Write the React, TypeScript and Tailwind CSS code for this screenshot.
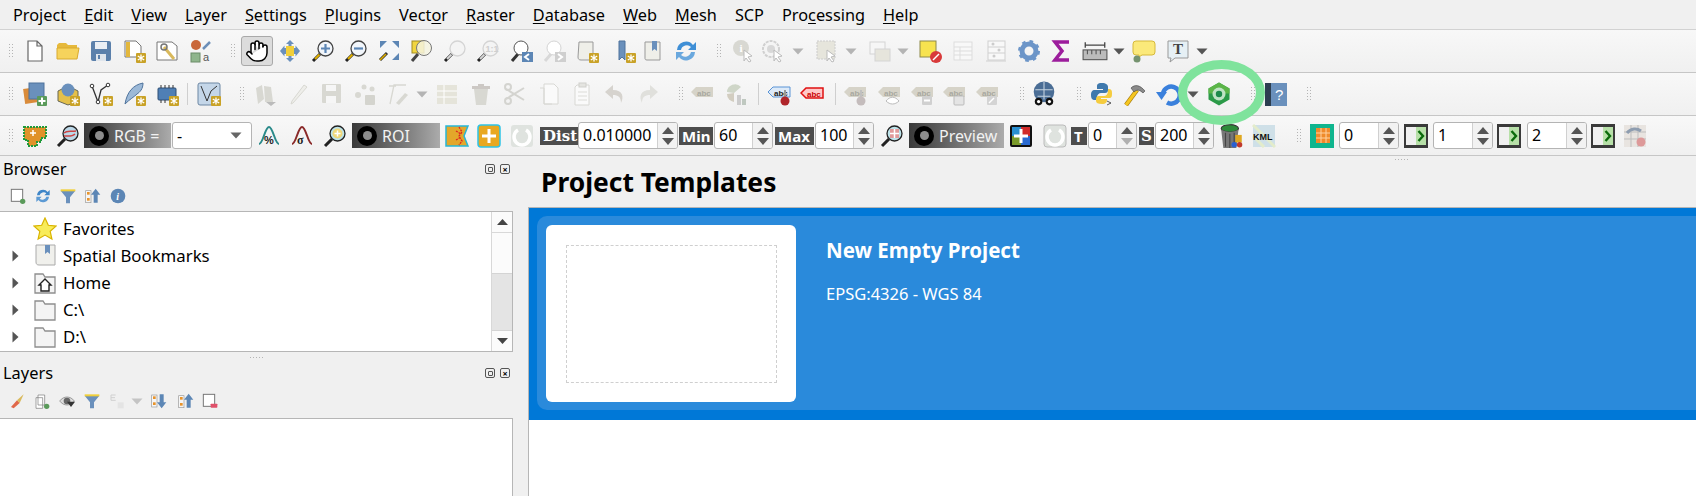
import type { ReactNode } from "react";
import { Hand } from "lucide-react";

const FONT = "font-['Noto_Sans',sans-serif]";

// ---------- svg pieces ----------

function I({ s = 24, children }: { s?: number; children: ReactNode }) {
  return (
    <svg width={s} height={s} viewBox="0 0 24 24" className="block shrink-0">
      {children}
    </svg>
  );
}

const Badge = () => (
  <g>
    <rect x="14" y="14" width="10" height="10" rx="1" fill="#c9a227" />
    <path d="M19 15.500v7M15.800 17l6.400 4M22.200 17l-6.400 4" stroke="#fff" strokeWidth="1.300" />
  </g>
);

const Plus = () => (
  <g>
    <rect x="14" y="14" width="10" height="10" rx="1" fill="#5a9a5a" />
    <path d="M19 15.500v7M15.500 19h7" stroke="#fff" strokeWidth="2" />
  </g>
);

function Mag({ fill = "#f2f6fb", ring = "#444", handle = "#e0b000", children }: { fill?: string; ring?: string; handle?: string; children?: ReactNode }) {
  return (
    <I>
      <path d="M9 15L2 22" stroke="#222" strokeWidth="3" />
      <path d="M8.500 15.500L4 20" stroke={handle} strokeWidth="2" />
      <circle cx="14.500" cy="9.500" r="7.500" fill={fill} stroke={ring} strokeWidth="1.300" />
      {children}
    </I>
  );
}

const GreyMag = ({ children }: { children?: ReactNode }) => (
  <Mag fill="#f4f4f4" ring="#d4d4d4" handle="#d8d8d8">{children}</Mag>
);

const Dd = ({ c = "#666" }: { c?: string }) => (
  <svg width="12" height="7" viewBox="0 0 12 7" className="block">
    <path d="M0.500 0.500h11L6 6.500z" fill={c} />
  </svg>
);

function Tag({ c = "#d6d3c8", t = "#a8a8a0", tail }: { c?: string; t?: string; tail?: ReactNode }) {
  return (
    <I>
      <path d="M1 10l5-5h17v10H6z" fill={c} />
      <text x="7" y="13.500" fontSize="8" fontWeight="700" fontFamily="Liberation Sans" fill={t}>abc</text>
      {tail}
    </I>
  );
}

const Grey = "#d8d8d2";

// ---------- toolbar parts ----------

function Btn({ className = "w-[33px]", children }: { className?: string; children?: ReactNode }) {
  return <div className={`flex h-[30px] shrink-0 items-center justify-center ${className}`}>{children}</div>;
}

function Grip({ className = "ml-[8px]" }: { className?: string }) {
  return (
    <div className={`flex h-[30px] w-[16px] shrink-0 items-center justify-center ${className}`}>
      <div className="h-[16px] w-[5px] bg-[radial-gradient(#b4b4b4_0.8px,transparent_1px)] bg-[length:3px_3px]" />
    </div>
  );
}

function Sep({ className = "mx-[2px]" }: { className?: string }) {
  return <div className={`h-[22px] w-px shrink-0 bg-[#cfcfcf] ${className}`} />;
}

function Bar({ children, h = "h-[43px]" }: { children: ReactNode; h?: string }) {
  return (
    <div className={`flex ${h} items-center border-b border-[#c6c6c6] bg-gradient-to-b from-[#f8f8f8] to-[#f0f0f0] pl-[2px]`}>
      {children}
    </div>
  );
}

function Spin({ value, className, atMin }: { value: string; className: string; atMin?: boolean }) {
  return (
    <div className={`flex h-[27px] shrink-0 items-stretch overflow-hidden rounded-[3px] border border-[#b4b4b4] bg-white ${className}`}>
      <div className="flex-1 pl-[4px] text-[16px] leading-[25px] text-black">{value}</div>
      <div className="flex w-[20px] flex-col items-center justify-center gap-[4px] border-l border-[#d0d0d0] bg-[#f2f2f2]">
        <svg width="12" height="7" viewBox="0 0 12 7"><path d="M6 0l6 7H0z" fill="#555" /></svg>
        <svg width="12" height="7" viewBox="0 0 12 7"><path d="M6 7l6-7H0z" fill={atMin ? "#b0b0b0" : "#555"} /></svg>
      </div>
    </div>
  );
}

function Tab({ t, className, font = "" }: { t: string; className: string; font?: string }) {
  return (
    <div className={`h-[18px] shrink-0 overflow-hidden bg-[#4d4d4d] text-[15px] font-bold leading-[18px] text-white ${font} ${className}`}>{t}</div>
  );
}

function RingLabel({ t, className }: { t: string; className: string }) {
  return (
    <div className={`flex h-[25px] shrink-0 items-center bg-gradient-to-r from-[#3a3a3a] to-[#ababab] pl-[5px] ${className}`}>
      <div className="flex size-[20px] shrink-0 items-center justify-center rounded-full bg-black">
        <div className="size-[9px] rounded-full bg-[#8c8c8c]" />
      </div>
      <span className="ml-[5px] text-[16px] text-[#f2f2f2]">{t}</span>
    </div>
  );
}

function NextBtn({ className }: { className: string }) {
  return (
    <div className={`flex h-[24px] w-[24px] shrink-0 justify-end border-y-[3px] border-x-2 border-[#3a3a3a] bg-[#f0f0f0] ${className}`}>
      <div className="flex w-[10px] items-center justify-center bg-[#b7e0a8] text-[#0b6b0b]">
        <svg width="8" height="12" viewBox="0 0 8 12"><path d="M1.500 1l4.500 5-4.500 5" fill="none" stroke="currentColor" strokeWidth="2.400" /></svg>
      </div>
    </div>
  );
}

// ---------- rows ----------

const MENU: [string, string, string][] = [
  ["", "", "Project"],
  ["", "E", "dit"],
  ["", "V", "iew"],
  ["", "L", "ayer"],
  ["", "S", "ettings"],
  ["", "P", "lugins"],
  ["Vect", "o", "r"],
  ["", "R", "aster"],
  ["", "D", "atabase"],
  ["", "W", "eb"],
  ["", "M", "esh"],
  ["", "", "SCP"],
  ["Pro", "c", "essing"],
  ["", "H", "elp"],
];

function MenuBar() {
  return (
    <div className="flex h-[30px] items-center gap-[18px] border-b border-[#d2d2d2] bg-[#f0f0f0] pl-[13px] pt-[2px] text-[16.300px] text-black">
      {MENU.map(([a, u, b]) => (
        <span key={a + u + b} className="whitespace-pre">
          {a}
          <span className="underline underline-offset-2">{u}</span>
          {b}
        </span>
      ))}
    </div>
  );
}

function Toolbar1() {
  return (
    <Bar>
      <Grip className="ml-0" />
      <Btn><I><path d="M5 2h9l5 5v15H5z M14 2v5h5" fill="#fff" stroke="#666" strokeWidth="1.200" /></I></Btn>
      <Btn><I><path d="M1 6l2-2h7l2 2h9v3H1z" fill="#e6b93c" /><path d="M1 20V9h22l-2 11z" fill="#f6d35c" stroke="#d9aa2e" /></I></Btn>
      <Btn><I><rect x="2" y="2" width="20" height="20" rx="2" fill="#5b80ab" /><rect x="6" y="3" width="12" height="7" fill="#e9eef4" /><rect x="7" y="15" width="10" height="7" fill="#dfe5ec" /><rect x="9" y="16" width="2" height="4" fill="#5b80ab" /></I></Btn>
      <Btn><I><path d="M3 2h11l5 5v11H3z" fill="#fff" stroke="#777" /><path d="M6 3v15" stroke="#e3b73c" strokeWidth="4" /><Badge /></I></Btn>
      <Btn><I><path d="M2 3h15l5 4v14H2z" fill="#fff" stroke="#777" /><path d="M9 8l10 12" stroke="#d9b95c" strokeWidth="3" /><circle cx="9" cy="8" r="3" fill="none" stroke="#777" strokeWidth="1.500" /></I></Btn>
      <Btn><I><circle cx="8" cy="6" r="5" fill="#c9673a" /><path d="M15 10l7-7" stroke="#6d8fb8" strokeWidth="2.500" /><rect x="3" y="14" width="9" height="9" fill="#8fb58c" stroke="#6b8c68" /><text x="15" y="22" fontSize="11" fontFamily="Liberation Sans" fill="#555">a</text></I></Btn>
      <Grip />
      <Btn className="w-[33px]">
        <div className="flex h-[30px] w-[32px] items-center justify-center rounded-[3px] border border-[#a9a9a9] bg-[#dcdcdc]">
          <Hand size={24} strokeWidth={1.500} className="text-black" fill="#fff" />
        </div>
      </Btn>
      <Btn><I><path d="M12 1l4 4h-2.500v4h4V6.500L22 12l-4.500 5.500V15h-4v4H16l-4 4-4-4h2.500v-4h-4v2.500L2 12l4.500-5.500V9h4V5H8z" fill="#6a90bc" /><rect x="8" y="7" width="8" height="10" fill="#f1cf3a" /></I></Btn>
      <Btn><Mag><path d="M14.500 5v9M10 9.500h9" stroke="#5c86b5" strokeWidth="2.200" /></Mag></Btn>
      <Btn><Mag><path d="M10 9.500h9" stroke="#5c86b5" strokeWidth="2.200" /></Mag></Btn>
      <Btn><I><rect x="3" y="2" width="19" height="19" fill="#f4f6f8" /><path d="M3 2h7L3 9zM22 2v7l-7-7zM22 21h-7l7-7z" fill="#5c86b5" /><path d="M3 21l7-7" stroke="#333" strokeWidth="3" /><path d="M3 21l6-6" stroke="#e0b000" strokeWidth="1.600" /></I></Btn>
      <Btn><I><rect x="2" y="2" width="12" height="12" fill="#f1d53f" stroke="#a08a20" /><path d="M8 15l-6 7" stroke="#444" strokeWidth="3" /><circle cx="14" cy="9" r="7.500" fill="#f5f3e0" fillOpacity="0.850" stroke="#777" /></I></Btn>
      <Btn><GreyMag /></Btn>
      <Btn><GreyMag><text x="9.500" y="13" fontSize="9" fontWeight="700" fontFamily="Liberation Sans" fill="#cfcfcf">1:1</text></GreyMag></Btn>
      <Btn><I><path d="M9 15l-6 7" stroke="#333" strokeWidth="3" /><circle cx="12" cy="9" r="7" fill="#fff" stroke="#555" /><rect x="13" y="13" width="11" height="10" fill="#5c86b5" /><path d="M20 15l-4 3 4 3" fill="none" stroke="#fff" strokeWidth="2" /></I></Btn>
      <Btn><I><path d="M9 15l-6 7" stroke="#d8d8d8" strokeWidth="3" /><circle cx="12" cy="9" r="7" fill="#fff" stroke="#d4d4d4" /><rect x="13" y="13" width="11" height="10" fill="#cfcfcf" /><path d="M16 15l4 3-4 3" fill="none" stroke="#fff" strokeWidth="2" /></I></Btn>
      <Btn><I><path d="M4 3h14v18H6c-2 0-3-1-3-3z" fill="#efefe9" stroke="#999" /><Badge /></I></Btn>
      <Btn className="ml-[4px] w-[33px]"><I><path d="M7 2h6v19l-3-3-3 3z" fill="#6a90bc" stroke="#4f739c" /><Badge /></I></Btn>
      <Btn className="w-[25px]"><I><path d="M4 3h15v18H6c-2 0-2-1-2-2z" fill="#efefe9" stroke="#999" /><path d="M11 2h5v10l-2.500-2L11 12z" fill="#6a90bc" /></I></Btn>
      <Btn className="ml-[4px] w-[33px]"><I><path d="M3 11a9 9 0 0 1 16-5l3-3v8h-8l3-3a6 6 0 0 0-10 3z" fill="#3f8fd6" /><path d="M21 13a9 9 0 0 1-16 5l-3 3v-8h8l-3 3a6 6 0 0 0 10-3z" fill="#6aa8de" /></I></Btn>
      <Grip />
      <Btn><I><circle cx="10" cy="9" r="8" fill={Grey} /><text x="8.500" y="13" fontSize="11" fontWeight="700" fontFamily="Liberation Serif" fill="#fff">i</text><path d="M13 11l8 6-4 1 3 4-2 1-3-4-2 3z" fill="#fff" stroke="#bbb" /></I></Btn>
      <Btn className="w-[27px]"><I><circle cx="10" cy="10" r="8" fill="#f4f4f4" stroke="#d0d0d0" strokeWidth="2" strokeDasharray="3 1" /><circle cx="10" cy="10" r="4" fill="#d8d8d8" /><path d="M13 11l8 6-4 1 3 4-2 1-3-4-2 3z" fill="#fff" stroke="#bbb" /></I></Btn>
      <Btn className="w-[24px]"><Dd c="#b4b4b4" /></Btn>
      <Btn><I><rect x="2" y="2" width="18" height="18" fill="#e6e5dc" stroke="#ccc" strokeDasharray="2 1" /><path d="M12 11l8 6-4 1 3 4-2 1-3-4-2 3z" fill="#fff" stroke="#bbb" /></I></Btn>
      <Btn className="w-[16px]"><Dd c="#b4b4b4" /></Btn>
      <Btn className="ml-[4px] w-[33px]"><I><rect x="2" y="3" width="15" height="12" fill="#f6f6f6" stroke="#d4d4d4" /><rect x="7" y="10" width="15" height="12" fill="#e6e5dc" stroke="#d4d4d4" /></I></Btn>
      <Btn className="w-[14px]"><Dd c="#b4b4b4" /></Btn>
      <Btn className="ml-[3px] w-[33px]"><I><rect x="2" y="2" width="16" height="16" fill="#f7e34f" stroke="#8e8a4a" /><circle cx="18" cy="18" r="6" fill="#d83a3a" /><path d="M15 21l6-6" stroke="#fff" strokeWidth="1.500" /></I></Btn>
      <Btn><I><rect x="3" y="3" width="18" height="18" fill="#f8f8f8" stroke="#ddd" /><path d="M3 8h18M3 12h18M3 16h18M9 8v13" stroke="#ddd" /></I></Btn>
      <Btn><I><rect x="4" y="2" width="17" height="19" fill="#f8f8f8" stroke="#d0d0d0" /><path d="M2 22h20M4 8h17M4 14h17" stroke="#d0d0d0" /><circle cx="9" cy="5" r="1.500" fill="#ccc" /><circle cx="15" cy="11" r="1.500" fill="#ccc" /><circle cx="10" cy="17" r="1.500" fill="#ccc" /></I></Btn>
      <Btn><I><circle cx="12" cy="12" r="7" fill="none" stroke="#6c95c8" strokeWidth="5" /><circle cx="12" cy="12" r="9.500" fill="none" stroke="#6c95c8" strokeWidth="3" strokeDasharray="3.500 4" /></I></Btn>
      <Btn><I><path d="M19 3H5l7 9-7 9h14" fill="none" stroke="#9c1d9c" strokeWidth="3.500" /></I></Btn>
      <Btn><I s={26}><path d="M3 4v5M21 4v5M3 6.500h18" stroke="#444" strokeWidth="1.200" /><rect x="1" y="11" width="22" height="9" fill="#bbb" stroke="#555" /><path d="M5 11v4M9 11v4M13 11v4M17 11v4" stroke="#555" /></I></Btn>
      <Btn className="w-[16px]"><Dd c="#555" /></Btn>
      <Btn><I><path d="M4 2h16a3 3 0 0 1 3 3v8a3 3 0 0 1-3 3H10l-3 2v-2H4a3 3 0 0 1-3-3V5a3 3 0 0 1 3-3z" fill="#fbe97a" stroke="#d6b93a" /><circle cx="5" cy="20" r="3.500" fill="#75936f" /></I></Btn>
      <Btn className="ml-[1px] w-[33px]"><I><path d="M2 2h20v17H9l-5 4 1-4H2z" fill="#e6f0f5" stroke="#999" /><text x="7" y="15" fontSize="15" fontWeight="700" fontFamily="Liberation Serif" fill="#444">T</text></I></Btn>
      <Btn className="w-[16px]"><Dd c="#555" /></Btn>
    </Bar>
  );
}

function Toolbar2() {
  return (
    <Bar>
      <Grip className="ml-0" />
      <Btn><I><rect x="1" y="6" width="15" height="15" fill="#d98b3a" transform="rotate(-8 8 13)" /><rect x="6" y="1" width="15" height="16" fill="#6a90bc" stroke="#4f739c" /><Plus /></I></Btn>
      <Btn><I><path d="M2 9l10-5 10 5v10l-10 4-10-4z" fill="#e4c04a" stroke="#665" /><circle cx="12" cy="8" r="6.500" fill="#6a90bc" /><Badge /></I></Btn>
      <Btn><I><path d="M3 4l6 16 3-12 7-5" fill="none" stroke="#333" strokeWidth="1.300" /><circle cx="3" cy="4" r="1.800" fill="#fff" stroke="#333" /><circle cx="9" cy="20" r="1.800" fill="#fff" stroke="#333" /><circle cx="19" cy="3" r="1.800" fill="#fff" stroke="#333" /><Badge /></I></Btn>
      <Btn><I><path d="M3 22C5 10 11 3 21 1c0 6-3 9-6 11-3 3-7 5-12 10z" fill="#9cb9d8" stroke="#4f739c" /><Badge /></I></Btn>
      <Btn><I><rect x="3" y="6" width="18" height="12" rx="1" fill="#4f7fb5" stroke="#2f4f74" /><path d="M6 3v3M10 3v3M14 3v3M18 3v3M6 18v3M10 18v3" stroke="#333" /><Badge /></I></Btn>
      <Sep className="ml-[4px] mr-[4px]" />
      <Btn className="w-[33px]"><I><rect x="1" y="1" width="22" height="22" rx="2" fill="#c4d6e8" stroke="#6d87a3" /><path d="M4 4l6 15 4-10 6-5" fill="none" stroke="#333" /><Badge /></I></Btn>
      <Grip className="ml-[8px]" />
      <Btn className="w-[33px]"><I><path d="M4 22L2 6l6-3 2 14zM11 20L10 4l7 1 2 15z" fill={Grey} /><path d="M12 20h10l-5 4z" fill="#bbb" /></I></Btn>
      <Btn className="w-[33px]"><I><path d="M6 21L4 22l1-3L17 3l3 2z" fill="#eeeeea" stroke="#d8d8d2" /></I></Btn>
      <Btn className="w-[33px]"><I><rect x="2" y="2" width="19" height="19" rx="1" fill={Grey} /><rect x="6" y="3" width="10" height="6" fill="#f6f6f6" /><rect x="6" y="14" width="10" height="7" fill="#f6f6f6" /></I></Btn>
      <Btn className="w-[33px]"><I><circle cx="5" cy="13" r="3" fill={Grey} /><circle cx="11" cy="5" r="2.500" fill={Grey} /><circle cx="19" cy="7" r="2.500" fill={Grey} /><rect x="12" y="13" width="10" height="10" rx="1" fill="#d4d4ce" /></I></Btn>
      <Btn className="w-[33px]"><I><path d="M4 22L8 3h12M3 4h7" fill="none" stroke={Grey} strokeWidth="1.300" /><path d="M10 21l9-10 3 2-9 10z" fill={Grey} /></I></Btn>
      <Btn className="w-[16px]"><Dd c="#b4b4b4" /></Btn>
      <Btn className="w-[34px]"><I><path d="M2 3h20v19H2z" fill="#e5e4da" /><path d="M2 9h20M2 15h20M9 3v19" stroke="#fff" /></I></Btn>
      <Btn className="w-[34px]"><I><path d="M5 7h14l-2 16H7z" fill={Grey} /><path d="M3 4h18v3H3zM9 2h6v2H9z" fill="#ccc8c4" /></I></Btn>
      <Btn className="w-[34px]"><I><path d="M3 7l18 11M3 17L21 6" stroke="#d4d4d0" strokeWidth="2" /><circle cx="5" cy="5" r="3" fill="none" stroke="#d4d4d0" strokeWidth="2" /><circle cx="5" cy="19" r="3" fill="none" stroke="#d4d4d0" strokeWidth="2" /></I></Btn>
      <Btn className="w-[34px]"><I><path d="M7 2h10l4 4v16H7z" fill="#fafafa" stroke="#d8d8d4" /><path d="M3 6h4v16h8" fill="none" stroke="#d8d8d4" /></I></Btn>
      <Btn className="w-[32px]"><I><path d="M7 3h12v20H5V5z" fill="#fafafa" stroke="#d8d8d4" /><rect x="9" y="1" width="7" height="4" fill="#e4e4e0" stroke="#d0d0cc" /><path d="M8 10h9M8 14h9M8 18h9" stroke="#dcdcd8" /></I></Btn>
      <Btn className="w-[33px]"><I><path d="M10 3L2 10l8 7v-4c5 0 8 2 8 8 3-6 2-13-8-13z" fill="#d6d3ce" /></I></Btn>
      <Btn className="w-[33px]"><I><path d="M14 3l8 7-8 7v-4c-5 0-8 2-8 8-3-6-2-13 8-13z" fill="#e0e0dc" /></I></Btn>
      <Grip className="ml-[8px]" />
      <Btn className="w-[28px]"><Tag /></Btn>
      <Btn className="w-[40px]"><I><path d="M3 10a8 8 0 0 1 14-5l-7 6z" fill="#cfd6c8" /><path d="M3 12a8 8 0 0 0 7 8v-9z" fill="#d2cdc0" /><rect x="13" y="13" width="4" height="10" fill="#ccc" /><rect x="18" y="17" width="4" height="6" fill="#bfc8c0" /></I></Btn>
      <Sep />
      <Btn className="w-[36px]"><Tag c="#ddeaf8" t="#222" tail={<><path d="M1 10l5-5h17v10H6z" fill="none" stroke="#5a94d6" /><path d="M18 8v7" stroke="#999" strokeWidth="2" /><circle cx="18" cy="19" r="4.500" fill="#b0252a" /></>} /></Btn>
      <Btn className="w-[30px]"><I><path d="M1 11l5-5h17v10H6z" fill="#ffc8c8" stroke="#e01010" strokeWidth="1.500" /><text x="7" y="14.500" fontSize="8" fontWeight="700" fontFamily="Liberation Sans" fill="#c80000">abc</text></I></Btn>
      <Sep className="ml-[8px] mr-[2px]" />
      <Btn className="w-[34px]"><Tag tail={<><path d="M18 8v7" stroke="#c0c0c0" strokeWidth="2" /><circle cx="18" cy="19" r="4.500" fill="#c4bcbc" /></>} /></Btn>
      <Btn className="w-[34px]"><Tag tail={<path d="M9 19c4-5 9-5 13 0-4 4-9 4-13 0z" fill="#fff" stroke="#bbb" />} /></Btn>
      <Btn className="w-[32px]"><Tag tail={<><rect x="12" y="14" width="10" height="9" rx="1" fill="#d0d0d0" /><path d="M14 18.500h6" stroke="#fff" strokeWidth="2" /></>} /></Btn>
      <Btn className="w-[32px]"><Tag tail={<rect x="12" y="14" width="10" height="9" rx="1" fill="#e4e4e4" stroke="#bbb" />} /></Btn>
      <Btn className="w-[34px]"><Tag tail={<><rect x="12" y="14" width="10" height="9" rx="1" fill="#d4d4d4" /><path d="M14 21l5-5" stroke="#fff" strokeWidth="1.500" /></>} /></Btn>
      <Grip className="ml-[9px]" />
      <Btn className="w-[30px]"><I s={26}><circle cx="12" cy="10" r="9.500" fill="#4a6d95" /><path d="M4 8h16M6 14h12M12 1v16" stroke="#c5d3e0" /><circle cx="7" cy="19" r="3.500" fill="#111" /><circle cx="17" cy="19" r="3.500" fill="#111" /><circle cx="7" cy="19" r="1.500" fill="#fff" /><circle cx="17" cy="19" r="1.500" fill="#fff" /></I></Btn>
      <Grip className="ml-[11px]" />
      <Btn className="w-[32px]"><I><path d="M12 1c-5 0-5 2-5 4v2h6v1H5c-3 0-4 2-4 5s1 5 4 5h2v-3c0-2 2-4 4-4h4c2 0 3-1 3-3V5c0-2-2-4-6-4z" fill="#3f79ad" /><path d="M12 22c4 0 5-2 5-4v-1h-6v-1h8c3 0 3-2 3-5s-1-4-3-4h-1v2c0 3-2 5-4 5H9c-2 0-3 1-3 3v2c0 2 2 3 6 3z" fill="#f5cc3f" /><path d="M17 19l4 2-4 2" fill="none" stroke="#333" strokeWidth="0.800" /></I></Btn>
      <Btn className="w-[34px]"><I><path d="M3 23L14 8" stroke="#a67c10" strokeWidth="4.500" /><path d="M3 23L14 8" stroke="#f5c620" strokeWidth="3" /><path d="M8 6c4-4 9-3 14 3l-2 2c-3-3-6-4-9-1z" fill="#8a8a8a" stroke="#444" strokeWidth="0.600" /></I></Btn>
      <Btn className="w-[32px]"><I><path d="M7 11a8.500 8.500 0 1 1 4 9.500" fill="none" stroke="#3a80dc" strokeWidth="4.500" /><path d="M0 10h11l-5.500 8z" fill="#3a80dc" /></I></Btn>
      <Btn className="w-[18px]"><Dd c="#555" /></Btn>
      <Btn className="w-[34px]"><I><path d="M12 0.500l10.500 6v11L12 23.500l-10.500-6v-11z" fill="#2b9a48" /><path d="M12 0.500l10.500 6v5H1.500v-5z" fill="#5cb548" /><circle cx="12" cy="12" r="6.500" fill="#bfe3c4" /><circle cx="12" cy="12" r="3.200" fill="#1d8a4a" /></I></Btn>
      <Grip className="ml-[8px]" />
      <Btn className="w-[32px]"><I><rect x="1" y="1" width="22" height="23" fill="#6a90bc" /><rect x="1" y="1" width="6" height="23" fill="#2c3e50" /><text x="11" y="18" fontSize="15" fontFamily="Liberation Sans" fill="#fff">?</text></I></Btn>
      <Grip className="ml-[8px]" />
    </Bar>
  );
}

function Toolbar3() {
  return (
    <Bar h="h-[40px]">
      <Grip className="ml-0" />
      <Btn><I><path d="M1 3h22v11h-5v4h-4v4H5v-6H1z" fill="#e0922a" stroke="#1f9a3a" strokeWidth="2" strokeDasharray="2 1" /><path d="M10 6v6M7 9h6" stroke="#fff" strokeWidth="1.500" /></I></Btn>
      <Btn><Mag ring="#222" handle="#222" fill="#bcd8e8"><path d="M8 9c3-3 7-1 12-2M8 12c4 0 8 1 11-2" stroke="#c44" strokeWidth="1.500" fill="none" /></Mag></Btn>
      <RingLabel t="RGB =" className="w-[87px]" />
      <div className="ml-px flex h-[27px] w-[80px] shrink-0 items-center justify-between rounded-[3px] border border-[#b4b4b4] bg-white pl-[4px] pr-[9px] text-[16px]">
        <span>-</span>
        <Dd c="#666" />
      </div>
      <Btn className="w-[33px]"><I><path d="M2 20C6 20 8 3 12 3s6 17 10 17" fill="none" stroke="#2a8a8a" strokeWidth="2" /><text x="7" y="20" fontSize="11" fontWeight="700" fontFamily="Liberation Sans" fill="#222">%</text></I></Btn>
      <Btn className="w-[34px]"><I><path d="M2 20C6 20 8 3 12 3s6 17 10 17" fill="none" stroke="#8a2a2a" strokeWidth="2" /><text x="7" y="20" fontSize="12" fontWeight="700" fontFamily="Liberation Serif" fill="#222">σ</text></I></Btn>
      <Btn className="w-[32px]"><Mag ring="#222" handle="#222" fill="#bde3ea"><circle cx="14.500" cy="9.500" r="5" fill="#f0d87a" /><path d="M14.500 6.500v6M11.500 9.500h6" stroke="#fff" strokeWidth="1.500" /></Mag></Btn>
      <RingLabel t="ROI" className="ml-px w-[88px]" />
      <Btn className="w-[33px]"><I><path d="M1 2h22l-4 10 4 10H1z" fill="#e3a72a" stroke="#27b7d6" strokeWidth="1.500" /><path d="M14 3l3 5-3 4 3 5-3 4M11 7l5 3M11 16l5-3" fill="none" stroke="#e02020" strokeWidth="1.300" strokeDasharray="2 1" /></I></Btn>
      <Btn className="w-[32px]"><I><rect x="1" y="1" width="22" height="22" rx="3" fill="#e8a820" stroke="#2ec3e6" strokeWidth="1.500" /><path d="M12 5v14M5 12h14" stroke="#fff" strokeWidth="3" /></I></Btn>
      <Btn className="w-[33px]"><I><rect x="1" y="1" width="22" height="22" rx="3" fill="#dfe3df" /><path d="M8 6a8 8 0 1 0 8 0" fill="none" stroke="#fff" strokeWidth="3.500" /></I></Btn>
      <Tab t="Dist" className="ml-[2px] w-[38px] pl-[3px]" font="font-['DejaVu_Serif',serif]" />
      <Spin value="0.010000" className="w-[100px]" />
      <Tab t="Min" className="ml-px w-[34px] pl-[3px]" />
      <Spin value="60" className="ml-px w-[59px]" />
      <Tab t="Max" className="ml-[2px] w-[39px] pl-[3px]" />
      <Spin value="100" className="ml-px w-[59px]" />
      <Btn className="w-[35px]"><Mag ring="#222" handle="#222" fill="#bde3ea"><rect x="10" y="5" width="9" height="9" fill="#e09a9a" /><path d="M14.500 5v9M10 9.500h9" stroke="#fff" strokeWidth="1.500" /></Mag></Btn>
      <RingLabel t="Preview" className="w-[95px]" />
      <Btn className="w-[34px]"><I><rect x="1" y="1" width="22" height="22" rx="2" fill="#111" /><rect x="3" y="3" width="9" height="9" fill="#2a8fd0" /><rect x="12" y="3" width="9" height="9" fill="#d02a2a" /><rect x="3" y="12" width="9" height="9" fill="#7a9a2a" /><rect x="12" y="12" width="9" height="9" fill="#2a6ad0" /><path d="M12 5v14M5 12h14" stroke="#fff" strokeWidth="3" /></I></Btn>
      <Btn className="w-[33px]"><I><rect x="1" y="1" width="22" height="22" rx="3" fill="#dfe3df" stroke="#bbb" /><path d="M8 6a8 8 0 1 0 8 0" fill="none" stroke="#fff" strokeWidth="3.500" /></I></Btn>
      <Tab t="T" className="w-[16px] pl-[3px]" />
      <Spin value="0" className="ml-px w-[49px]" atMin />
      <Tab t="S" className="ml-[2px] w-[15px] pl-[2px]" font="font-['DejaVu_Serif',serif]" />
      <Spin value="200" className="ml-[1px] w-[59px]" />
      <Btn className="w-[36px]"><I s={26}><ellipse cx="10" cy="5" rx="8" ry="3.500" fill="#2d8a3a" stroke="#333" /><path d="M2 6l2 17h12l2-17c-4 3-12 3-16 0z" fill="#777" /><path d="M6 9v13M10 10v13M14 9v13" stroke="#444" /><rect x="15" y="11" width="6" height="7" fill="#e0a820" /><circle cx="19" cy="20" r="2.500" fill="#c0392b" /><circle cx="14" cy="20" r="2.500" fill="#2a5fd0" /></I></Btn>
      <Btn className="w-[28px]"><I><rect x="1" y="1" width="22" height="22" fill="#cfe0e8" /><path d="M1 1l22 22M1 12l11 11" stroke="#e3eccb" strokeWidth="3" /><text x="1" y="16" fontSize="9" fontWeight="700" fontFamily="Liberation Sans" fill="#111">KML</text></I></Btn>
      <Grip className="ml-[12px]" />
      <Btn className="w-[32px]"><I><rect x="0" y="0" width="24" height="24" fill="#0fb58e" /><rect x="6" y="4" width="14" height="15" fill="#f08a2a" /><path d="M6 9h14M6 14h14M11 4v15M16 4v15" stroke="#ffd2a0" /></I></Btn>
      <Spin value="0" className="ml-px w-[60px]" />
      <NextBtn className="ml-[5px]" />
      <Spin value="1" className="ml-[5px] w-[60px]" />
      <NextBtn className="ml-[4px]" />
      <Spin value="2" className="ml-[6px] w-[60px]" />
      <NextBtn className="ml-[4px]" />
      <Btn className="ml-[5px] w-[30px]"><I><rect x="1" y="1" width="22" height="22" fill="#e8e4e0" /><path d="M1 8h22M1 15h22M8 1v22M15 1v22" stroke="#bdbdbd" /><path d="M4 9c4-5 10-5 14-2" fill="none" stroke="#8e9db0" strokeWidth="3" /><circle cx="18" cy="18" r="4.500" fill="#d99" /></I></Btn>
    </Bar>
  );
}

// ---------- dock panels ----------

function DockTitle({ t }: { t: string }) {
  return (
    <div className="flex items-center justify-between pl-[3px] pr-[3px] text-[16.400px] leading-[22px] text-black">
      <span>{t}</span>
      <div className="flex gap-[5px]">
        <div className="flex size-[10px] items-center justify-center rounded-[2px] border border-[#555]"><div className="size-[5px] rounded-[1px] border border-[#555]" /></div>
        <div className="flex size-[10px] items-center justify-center rounded-[2px] border border-[#555] text-[9px] font-bold leading-none">×</div>
      </div>
    </div>
  );
}

const Small = ({ children, className = "w-[25px]" }: { children: ReactNode; className?: string }) => (
  <div className={`flex shrink-0 justify-center ${className}`}>
    <I s={16}>{children}</I>
  </div>
);

const GroupAdd = (
  <>
    <rect x="2" y="2" width="17" height="18" fill="#fff" stroke="#777" strokeWidth="1.500" />
    <circle cx="19" cy="20" r="4" fill="#5a9a5a" />
  </>
);
const Funnel = (
  <>
    <path d="M1 4h22l-8 10v9h-6v-9z" fill="#6a90bc" />
    <path d="M1 2h22v3H1z" fill="#f0cf3a" />
  </>
);
const TreeUp = (
  <>
    <rect x="1" y="4" width="8" height="18" fill="#f5f5f5" stroke="#999" />
    <rect x="3" y="6" width="4" height="4" fill="#e8932a" />
    <rect x="3" y="15" width="4" height="4" fill="#e8932a" />
    <path d="M16 1l7 9h-4v12h-6V10H9z" fill="#5c86b5" />
  </>
);

function TreeRow({ label, arrow = true, children }: { label: string; arrow?: boolean; children: ReactNode }) {
  return (
    <div className="flex h-[27px] items-center text-[16.800px] text-black">
      <div className="flex w-[30px] shrink-0 justify-center">
        {arrow && (
          <svg width="7" height="12" viewBox="0 0 7 12"><path d="M0.500 0.500L6.500 6l-6 5.500z" fill="#555" /></svg>
        )}
      </div>
      <div className="flex w-[30px] shrink-0 justify-center">
        <I>{children}</I>
      </div>
      <span className="ml-[3px]">{label}</span>
    </div>
  );
}

const DriveFolder = (
  <path d="M2 3h8l2 3h10v16H2z" fill="#f4f4f4" stroke="#8e8e8e" strokeWidth="1.300" />
);

function Browser() {
  return (
    <div>
      <div className="pt-[2px]"><DockTitle t="Browser" /></div>
      <div className="flex h-[31px] items-center pl-[5px]">
        <Small>{GroupAdd}</Small>
        <Small><path d="M3 11a9 9 0 0 1 16-5l3-3v8h-8l3-3a6 6 0 0 0-10 3z" fill="#3f86c8" /><path d="M21 13a9 9 0 0 1-16 5l-3 3v-8h8l-3 3a6 6 0 0 0 10-3z" fill="#5c9ad4" /></Small>
        <Small>{Funnel}</Small>
        <Small>{TreeUp}</Small>
        <Small><circle cx="12" cy="12" r="11" fill="#5c86b5" /><text x="9.500" y="18" fontSize="15" fontWeight="700" fontStyle="italic" fontFamily="Liberation Serif" fill="#fff">i</text></Small>
      </div>
      <div className="flex h-[141px] border border-l-0 border-[#b6b6b6] bg-white">
        <div className="flex-1 pt-[3px]">
          <TreeRow label="Favorites" arrow={false}>
            <path d="M12 1l3.300 7.300 7.700.8-5.800 5.200 1.700 7.800L12 18.100l-6.900 4 1.700-7.800L1 9.100l7.700-.8z" fill="#f8ec5a" stroke="#d9b400" strokeWidth="1.200" />
          </TreeRow>
          <TreeRow label="Spatial Bookmarks">
            <path d="M3 1h19v20H6c-2 0-3-1-3-3z" fill="#f0f0ec" stroke="#aaa" />
            <path d="M12 1h5v9l-2.500-2L12 10z" fill="#6a90bc" />
          </TreeRow>
          <TreeRow label="Home">
            {DriveFolder}
            <path d="M6 14l6-6 6 6h-2v6H8v-6z" fill="#fff" stroke="#222" strokeWidth="1.400" />
          </TreeRow>
          <TreeRow label="C:\">{DriveFolder}</TreeRow>
          <TreeRow label="D:\">{DriveFolder}</TreeRow>
        </div>
        <div className="flex w-[21px] flex-col border-l border-[#d8d8d8] bg-[#fbfbfb]">
          <div className="flex h-[21px] items-center justify-center border-b border-[#d8d8d8]">
            <svg width="11" height="6" viewBox="0 0 11 6"><path d="M5.500 0l5.500 6H0z" fill="#444" /></svg>
          </div>
          <div className="h-[40px]" />
          <div className="h-[58px] border-y border-[#d4d4d4] bg-[#e4e4e4]" />
          <div className="flex flex-1 items-center justify-center">
            <svg width="11" height="6" viewBox="0 0 11 6"><path d="M5.500 6l5.500-6H0z" fill="#444" /></svg>
          </div>
        </div>
      </div>
    </div>
  );
}

function Layers() {
  return (
    <div className="flex flex-1 flex-col">
      <div className="flex h-[10px] items-center justify-center">
        <div className="h-[3px] w-[16px] bg-[radial-gradient(#b4b4b4_0.7px,transparent_0.9px)] bg-[length:3px_3px]" />
      </div>
      <DockTitle t="Layers" />
      <div className="flex h-[34px] items-center pl-[4px]">
        <Small><path d="M3 21l9-10 4 4-9 8z" fill="#e0684a" /><path d="M12 11l10-9-6 13z" fill="#d9b95c" /></Small>
        <Small><path d="M6 3h10v15H6zM3 7h10v16H3z" fill="#fff" stroke="#777" /><circle cx="19" cy="20" r="4" fill="#5a9a5a" /></Small>
        <Small className="w-[26px]"><path d="M1 12c6-8 16-8 22 0-6 8-16 8-22 0z" fill="#ddd" stroke="#777" /><circle cx="12" cy="12" r="5" fill="#666" /><path d="M12 13h12l-6 8z" fill="#333" /></Small>
        <Small className="w-[24px]">{Funnel}</Small>
        <Small className="w-[26px]"><path d="M10 3H3v8h7M3 7h6" fill="none" stroke="#d0d0d0" strokeWidth="1.500" /><rect x="13" y="14" width="9" height="9" fill="#e4e4e4" /></Small>
        <div className="flex w-[14px] justify-center"><Dd c="#c4c4c4" /></div>
        <Small className="w-[30px]"><rect x="1" y="3" width="8" height="18" fill="#f5f5f5" stroke="#999" /><rect x="3" y="5" width="4" height="4" fill="#e8932a" /><rect x="3" y="14" width="4" height="4" fill="#e8932a" /><path d="M16 23l7-9h-4V2h-6v12H9z" fill="#5c86b5" /></Small>
        <Small className="w-[24px]">{TreeUp}</Small>
        <Small className="w-[24px]"><rect x="2" y="2" width="17" height="18" fill="#fff" stroke="#777" strokeWidth="1.500" /><rect x="13" y="16" width="10" height="6" rx="1" fill="#e0506a" /></Small>
      </div>
      <div className="flex-1 border border-b-0 border-l-0 border-[#b6b6b6] bg-white" />
    </div>
  );
}

function Templates() {
  return (
    <div className="flex min-w-0 flex-1 flex-col">
      <div className="flex h-[51px] items-center pl-[13px] pt-[3px] text-[26.400px] font-bold text-black">Project Templates</div>
      <div className="flex-1 border-l border-t border-[#b6b6b6] bg-white">
        <div className="bg-[#0078d7] pb-[10px] pl-[8px] pt-[8px]">
          <div className="flex h-[194px] rounded-l-[10px] bg-[#2a8adb] py-[9px] pl-[9px]">
            <div className="flex h-[177px] w-[250px] shrink-0 items-center justify-center rounded-[6px] bg-white">
              <div className="h-[138px] w-[211px] border border-dashed border-[#cfcfcf]" />
            </div>
            <div className="pl-[30px] pt-[10px] text-white">
              <div className="text-[20.500px] font-bold leading-[30px]">New Empty Project</div>
              <div className="mt-[18px] text-[16.500px] leading-[22px]">EPSG:4326 - WGS 84</div>
            </div>
          </div>
        </div>
      </div>
    </div>
  );
}

export default function App() {
  return (
    <div className={`relative flex h-[496px] w-[1696px] flex-col overflow-hidden bg-[#f0f0f0] ${FONT}`}>
      <MenuBar />
      <Toolbar1 />
      <Toolbar2 />
      <Toolbar3 />
      <div className="flex min-h-0 flex-1">
        <div className="flex w-[513px] shrink-0 flex-col">
          <Browser />
          <Layers />
        </div>
        <div className="w-[15px] shrink-0" />
        <Templates />
      </div>
      {/* splitter dots and the annotation ring sit on top */}
      <div className="absolute left-[1394px] top-[158px] h-[3px] w-[16px] bg-[radial-gradient(#b4b4b4_0.7px,transparent_0.9px)] bg-[length:3px_3px]" />
      <div className="absolute left-[1178px] top-[60px] h-[65px] w-[87px] rounded-[50%] border-[9px] border-[#7fe39c]" />
    </div>
  );
}
